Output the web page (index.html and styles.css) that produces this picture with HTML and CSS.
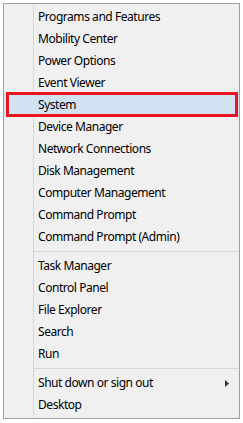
FILE: index.html
```html
<!DOCTYPE html>
<html>
<head>
<meta charset="utf-8">
<link rel="stylesheet" href="styles.css">
</head>
<body>
<div class="menu">
  <div class="item">Programs and Features</div>
  <div class="item">Mobility Center</div>
  <div class="item">Power Options</div>
  <div class="item">Event Viewer</div>
  <div class="item selected">System</div>
  <div class="item">Device Manager</div>
  <div class="item">Network Connections</div>
  <div class="item">Disk Management</div>
  <div class="item">Computer Management</div>
  <div class="item">Command Prompt</div>
  <div class="item">Command Prompt (Admin)</div>
  <div class="sep"></div>
  <div class="item">Task Manager</div>
  <div class="item">Control Panel</div>
  <div class="item">File Explorer</div>
  <div class="item">Search</div>
  <div class="item">Run</div>
  <div class="sep"></div>
  <div class="item sub">Shut down or sign out
    <svg class="arrow" width="4" height="7" viewBox="0 0 4 7"><path d="M0 0 L4 3.5 L0 7 Z" fill="#333"/></svg>
  </div>
  <div class="item">Desktop</div>
  <div class="mark"></div>
</div>
</body>
</html>
```

FILE: styles.css
```css
html, body {
  margin: 0;
  padding: 0;
  background: #ffffff;
}
body {
  padding: 3px 0 0 3px;
}
.menu {
  position: relative;
  box-sizing: border-box;
  width: 237px;
  height: 416px;
  border: 1px solid #a0a0a0;
  background-color: #f0f0f0;
  background-image: linear-gradient(#d7d7d7, #d7d7d7);
  background-repeat: no-repeat;
  background-size: 1px calc(100% - 2px);
  background-position: 29px 1px;
  padding: 2px 0 2px 0;
  font-family: "Segoe UI", "Noto Sans", sans-serif;
  font-size: 12px;
  letter-spacing: -0.45px;
  color: #000;
}
.item {
  height: 22px;
  line-height: 22px;
  padding-left: 34px;
  white-space: nowrap;
  display: flex;
  align-items: center;
  justify-content: space-between;
  padding-right: 10px;
}
.item.selected {
  background: #d1e3f3;
}
.sep {
  height: 1px;
  background: #d7d7d7;
  margin: 3px 1px 3px 29px;
}
.arrow {
  display: block;
}
.mark {
  position: absolute;
  left: 2px;
  top: 88px;
  width: 232px;
  height: 25px;
  box-sizing: border-box;
  border: 3px solid #e8141f;
}
```
